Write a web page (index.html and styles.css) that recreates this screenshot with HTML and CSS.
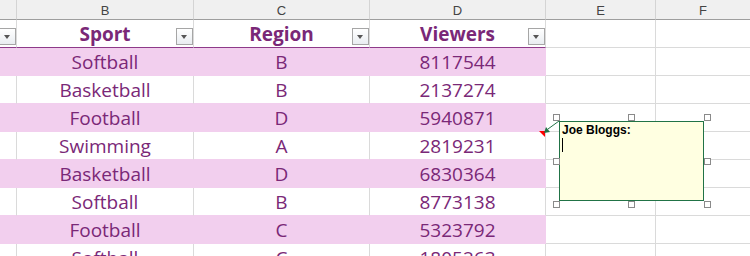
FILE: index.html
```html
<!DOCTYPE html>
<html lang="en">
  <head>
    <meta charset="UTF-8" />
    <title>Sheet</title>
    <link rel="stylesheet" href="styles.css">
  </head>
  <body>
    <div class="sheet">
      <div class="row letters">
        <div class="cell"></div>
        <div class="cell">B</div>
        <div class="cell">C</div>
        <div class="cell">D</div>
        <div class="cell">E</div>
        <div class="cell">F</div>
      </div>

      <div class="row head">
        <div class="cell tbl"><span class="filter"></span></div>
        <div class="cell tbl">Sport<span class="filter"></span></div>
        <div class="cell tbl">Region<span class="filter"></span></div>
        <div class="cell tbl">Viewers<span class="filter"></span></div>
        <div class="cell"></div>
        <div class="cell"></div>
      </div>

      <div class="row band">
        <div class="cell tbl"></div>
        <div class="cell tbl">Softball</div>
        <div class="cell tbl">B</div>
        <div class="cell tbl">8117544</div>
        <div class="cell"></div>
        <div class="cell"></div>
      </div>
      <div class="row">
        <div class="cell tbl"></div>
        <div class="cell tbl">Basketball</div>
        <div class="cell tbl">B</div>
        <div class="cell tbl">2137274</div>
        <div class="cell"></div>
        <div class="cell"></div>
      </div>
      <div class="row band">
        <div class="cell tbl"></div>
        <div class="cell tbl">Football</div>
        <div class="cell tbl">D</div>
        <div class="cell tbl">5940871</div>
        <div class="cell"></div>
        <div class="cell"></div>
      </div>
      <div class="row">
        <div class="cell tbl"></div>
        <div class="cell tbl">Swimming</div>
        <div class="cell tbl">A</div>
        <div class="cell tbl">2819231</div>
        <div class="cell"></div>
        <div class="cell"></div>
      </div>
      <div class="row band">
        <div class="cell tbl"></div>
        <div class="cell tbl">Basketball</div>
        <div class="cell tbl">D</div>
        <div class="cell tbl">6830364</div>
        <div class="cell"></div>
        <div class="cell"></div>
      </div>
      <div class="row">
        <div class="cell tbl"></div>
        <div class="cell tbl">Softball</div>
        <div class="cell tbl">B</div>
        <div class="cell tbl">8773138</div>
        <div class="cell"></div>
        <div class="cell"></div>
      </div>
      <div class="row band">
        <div class="cell tbl"></div>
        <div class="cell tbl">Football</div>
        <div class="cell tbl">C</div>
        <div class="cell tbl">5323792</div>
        <div class="cell"></div>
        <div class="cell"></div>
      </div>
      <div class="row">
        <div class="cell tbl"></div>
        <div class="cell tbl">Softball</div>
        <div class="cell tbl">C</div>
        <div class="cell tbl">1805263</div>
        <div class="cell"></div>
        <div class="cell"></div>
      </div>

      <!-- comment on D6 -->
      <svg class="pointer" width="750" height="256">
        <polygon points="539,131 545,131 545,137" fill="#ff0000" />
        <line x1="559" y1="121" x2="548" y2="129" stroke="#217346" stroke-width="1" />
        <polygon points="544,133 546,127 550,132" fill="#217346" />
      </svg>
      <div class="note">
        <b>Joe Bloggs:</b>
        <span class="caret"></span>
      </div>
      <span class="handle" style="left:553px;top:114px"></span>
      <span class="handle" style="left:628px;top:114px"></span>
      <span class="handle" style="left:704px;top:114px"></span>
      <span class="handle" style="left:553px;top:158px"></span>
      <span class="handle" style="left:704px;top:158px"></span>
      <span class="handle" style="left:553px;top:201px"></span>
      <span class="handle" style="left:628px;top:201px"></span>
      <span class="handle" style="left:704px;top:201px"></span>
    </div>
  </body>
</html>
```

FILE: styles.css
```css
* {
  box-sizing: border-box;
}
body {
  margin: 0;
  padding: 0;
  background: #ffffff;
  overflow: hidden;
}
.sheet {
  position: relative;
  width: 750px;
  height: 256px;
  overflow: hidden;
  font-family: "Open Sans", sans-serif;
  font-size: 19px;
  color: #7a2877;
}
.row {
  display: grid;
  grid-template-columns: 17px 177px 176px 176px 110px 1fr;
  height: 28px;
}
.cell {
  position: relative;
  display: flex;
  align-items: center;
  justify-content: center;
  border-right: 1px solid #dadada;
  border-bottom: 1px solid #dadada;
  white-space: nowrap;
}
.cell:last-child {
  border-right: none;
}

/* column letters */
.letters {
  height: 20px;
  background: #f0f0f0;
}
.letters .cell {
  font-family: "Liberation Sans", Arial, sans-serif;
  font-size: 13px;
  color: #444444;
  border-right-color: #d4d4d4;
  border-bottom-color: #9e9e9e;
  padding-top: 1px;
}

/* table header */
.head .cell.tbl {
  font-weight: bold;
  border-bottom: 1px solid #8e3a89;
}
.filter {
  position: absolute;
  right: 0;
  top: 8px;
  width: 17px;
  height: 17px;
  border: 1px solid #a6a6a6;
  background: linear-gradient(#ffffff, #e9edf1);
}
.filter::after {
  content: "";
  position: absolute;
  left: 4px;
  top: 6px;
  border-left: 3.5px solid transparent;
  border-right: 3.5px solid transparent;
  border-top: 4px solid #555555;
}

/* banded rows */
.band .cell.tbl {
  background: #f2cfee;
  border-color: #f2cfee;
}
.row .cell.tbl {
  border-bottom-color: #f2cfee;
}
.head .cell.tbl {
  border-bottom-color: #8e3a89;
}

/* comment */
.pointer {
  position: absolute;
  left: 0;
  top: 0;
}
.note {
  position: absolute;
  left: 559px;
  top: 121px;
  width: 145px;
  height: 80px;
  background: #ffffe1;
  border: 1px solid #217346;
  padding: 1px 2px;
  font-family: "Liberation Sans", Tahoma, sans-serif;
  font-size: 12px;
  line-height: 14px;
  color: #000000;
}
.note b {
  display: block;
}
.caret {
  display: block;
  margin-top: 1px;
  width: 1px;
  height: 14px;
  background: #000000;
}
.handle {
  position: absolute;
  width: 7px;
  height: 7px;
  background: #ffffff;
  border: 1px solid #8a8a8a;
}
```
